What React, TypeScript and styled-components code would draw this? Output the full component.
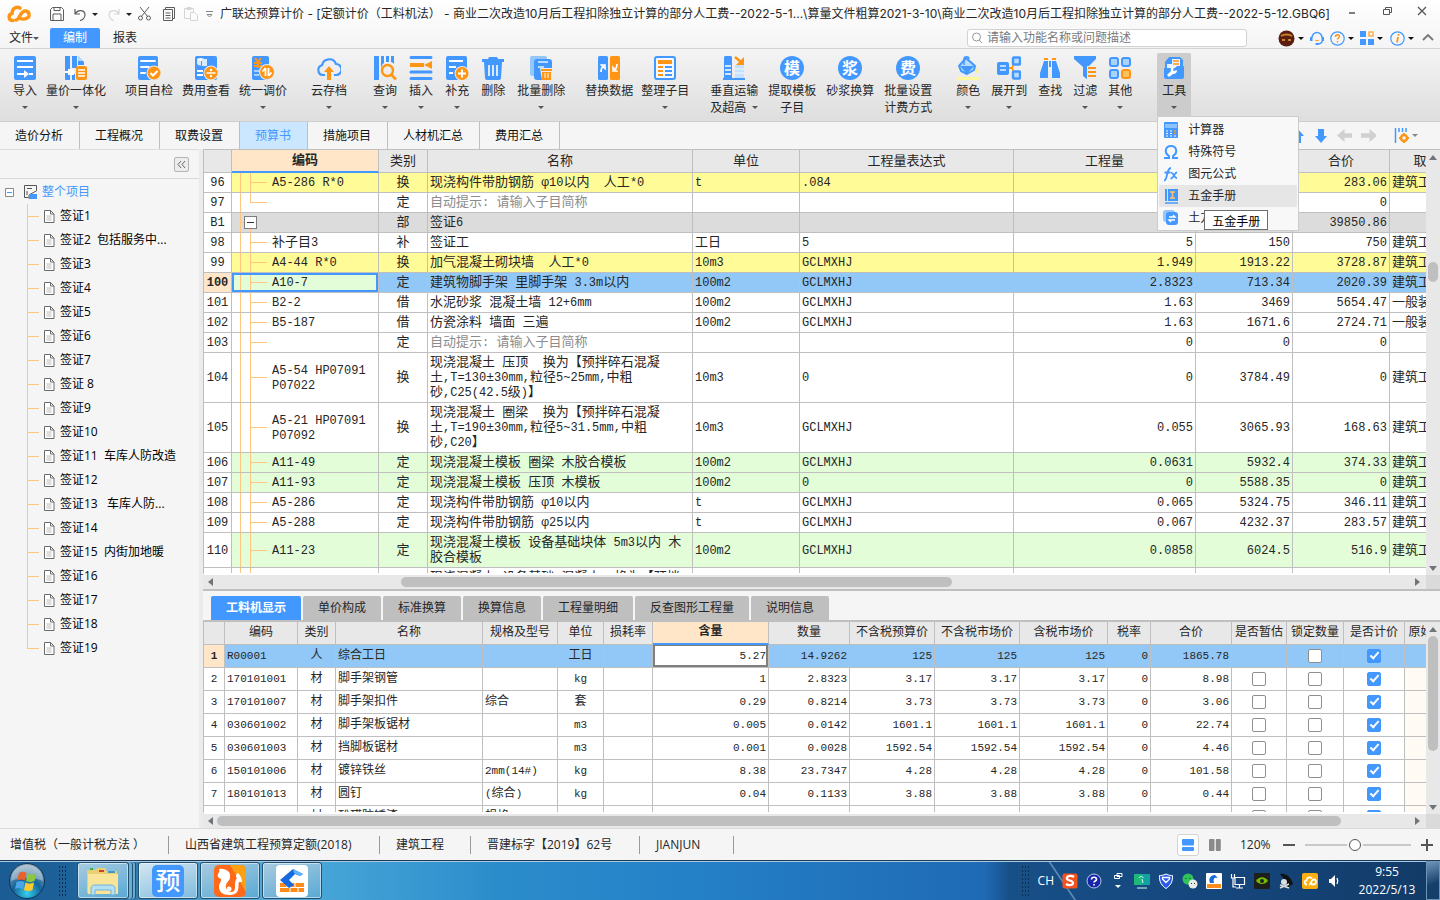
import React from "react";
import styled, { createGlobalStyle, css } from "styled-components";

const ui = `"Open Sans", "Noto Sans CJK SC", sans-serif`;
const mono = `"Liberation Mono", "Noto Sans CJK SC", monospace`;
const blue = "#4398ff";
const orange = "#ff9514";
const line = "#bfbfbf";

const Global = createGlobalStyle`
  *, *::before, *::after { box-sizing: border-box; }
  body { margin: 0; font: 12px/16px ${ui}; color: #262626; background: #f5f5f5; }
  button { font: inherit; color: inherit; background: none; border: 0; padding: 0; white-space: nowrap; }
  svg { display: block; flex: none; }
`;

const App_ = styled.div`
  display: flex;
  flex-direction: column;
  height: 100vh;
  min-width: 1280px;
  overflow: hidden;
`;

const Caret = styled.span<{ $c?: string }>`
  flex: none;
  width: 0;
  height: 0;
  border: 3px solid transparent;
  border-top-color: ${(p) => p.$c || "#555"};
  border-bottom: 0;
`;

/* ---------- title and menu ---------- */

const Top = styled.header`
  flex: none;
  height: 49px;
  background: linear-gradient(#ffffff, #f4f4f4);
  border-bottom: 1px solid #d4d4d4;
`;

const TitleRow = styled.div`
  display: flex;
  align-items: center;
  height: 28px;
  padding: 0 12px 0 7px;
`;

const QuickBar = styled.div`
  display: flex;
  align-items: center;
  width: 213px;
  flex: none;
  button { display: flex; align-items: center; }
`;

const QuickButton = styled.button<{ $w: number }>`
  width: ${(p) => p.$w}px;
  height: 24px;
`;

const Title = styled.h1`
  flex: 1;
  min-width: 0;
  margin: 0;
  font: 400 12px/28px Inter, "Noto Sans CJK SC", sans-serif;
  white-space: nowrap;
  overflow: hidden;
`;

const WindowButtons = styled.div`
  display: flex;
  gap: 23px;
  padding-bottom: 6px;
  button { display: block; }
`;

const MenuRow = styled.div`
  display: flex;
  height: 20px;
  align-items: center;
  padding-right: 6px;
`;

const FileMenu = styled.button`
  display: flex;
  align-items: center;
  width: 50px;
  padding-left: 9px;
`;

const MenuTab = styled.button<{ $on?: boolean }>`
  width: 50px;
  height: 20px;
  line-height: 20px;
  ${(p) => p.$on && css`background: ${blue}; color: #fff; border-radius: 2px 2px 0 0;`}
`;

const Search = styled.label`
  display: flex;
  align-items: center;
  gap: 4px;
  width: 280px;
  height: 18px;
  margin-left: auto;
  margin-right: 31px;
  padding: 0 3px;
  background: #fff;
  border: 1px solid #d2d2d2;
  border-radius: 3px;
  input {
    flex: 1;
    min-width: 0;
    border: 0;
    padding: 0;
    outline: 0;
    background: none;
    font: 12px/16px ${ui};
    &::placeholder { color: #7a7a7a; opacity: 1; }
  }
`;

const MenuIcon = styled.button<{ $w: number }>`
  display: flex;
  align-items: center;
  gap: 3px;
  width: ${(p) => p.$w}px;
`;

/* ---------- ribbon ---------- */

const Ribbon = styled.nav`
  display: flex;
  flex: none;
  height: 73px;
  padding-top: 4px;
  padding-left: 13px;
  background: linear-gradient(#f4f4f4, #dedede);
  border-bottom: 1px solid #cfcfcf;
`;

const RibbonGroup = styled.div<{ $gap: number; $before: number }>`
  display: flex;
  gap: ${(p) => p.$gap}px;
  margin-left: ${(p) => p.$before}px;
`;

const RibbonButton = styled.button<{ $on?: boolean }>`
  position: relative;
  display: flex;
  flex-direction: column;
  align-items: center;
  height: 64px;
  padding-top: 3px;
  border-radius: 2px;
  line-height: 17px;
  ${(p) => p.$on && css`width: 34px; background: #cccccc;`}
`;

const RibbonLabel = styled.span`
  padding-top: 2px;
`;

const RibbonMore = styled.span`
  display: flex;
  align-items: center;
  gap: 6px;
  height: 17px;
`;

const Menu = styled.ul`
  position: absolute;
  z-index: 5;
  top: 63px;
  left: 0;
  width: 142px;
  margin: 0;
  padding: 2px 1px 1px;
  list-style: none;
  background: #f8f8f8;
  border: 1px solid #cccccc;
`;

const MenuItem = styled.li<{ $on?: boolean }>`
  display: flex;
  align-items: center;
  gap: 9px;
  height: 22px;
  padding-left: 4px;
  background: ${(p) => (p.$on ? "#e6e6e6" : "none")};
  svg { width: 16px; height: 16px; }
`;

const Tip = styled.span`
  position: absolute;
  right: 30px;
  bottom: 0;
  padding: 0 7px;
  height: 20px;
  line-height: 22px;
  color: #000;
  background: #fff;
  border: 1px solid #6e6e6e;
`;

const MenuHolder = styled.div`
  position: relative;
`;

/* ---------- page tabs ---------- */

const PageTabs = styled.nav`
  display: flex;
  flex: none;
  height: 27px;
  background: #f5f5f5;
  padding-right: 22px;
`;

const PageTab = styled.button<{ $on?: boolean }>`
  padding: 0 16px 0 15px;
  border-right: 1px solid ${line};
  line-height: 27px;
  color: ${(p) => (p.$on ? blue : "#111")};
  background: ${(p) => (p.$on ? "#cbe6ff" : "none")};
`;

const TabTools = styled.div`
  display: flex;
  align-items: center;
  gap: 9px;
  margin-left: auto;
`;

const ColumnTool = styled.button`
  display: flex;
  align-items: center;
  gap: 3px;
  margin-left: 9px;
`;

/* ---------- body ---------- */

const Body = styled.main`
  flex: 1;
  min-height: 0;
  display: grid;
  grid-template-columns: 199px minmax(0, 1fr);
  column-gap: 4px;
  background: #ebebeb;
`;

const Side = styled.aside`
  background: #f5f5f5;
  border-top: 1px solid #dcdcdc;
`;

const SideHead = styled.div`
  display: flex;
  justify-content: flex-end;
  align-items: center;
  height: 29px;
  padding-right: 10px;
  border-bottom: 1px solid #d9d9d9;
`;

const Collapse = styled.button`
  width: 15px;
  height: 15px;
  border: 1px solid #b4b4b4 !important;
  border-radius: 2px;
  background: #ececec !important;
`;

const TreeRoot = styled.div`
  display: flex;
  align-items: center;
  gap: 4px;
  height: 24px;
  margin-top: 1px;
  padding-left: 5px;
  color: ${blue};
  svg:first-child { margin-right: 6px; }
`;

const Tree = styled.ul`
  margin: 0 0 0 27px;
  padding: 0;
  list-style: none;
`;

const Leaf = styled.li`
  display: flex;
  align-items: center;
  height: 24px;
  gap: 5px;
  white-space: pre;
  color: #000;
  background: linear-gradient(#ffc67e, #ffc67e) 0 0 / 1px 100% no-repeat;
  &:last-child { background-size: 1px 50%; }
  &::before { content: ""; width: 12px; height: 1px; background: #ffc67e; }
`;

const Work = styled.section`
  display: flex;
  flex-direction: column;
  min-height: 0;
  background: #f5f5f5;
`;

const Pane = styled.div<{ $fixed?: number }>`
  display: flex;
  min-height: 0;
  flex: ${(p) => (p.$fixed ? `none` : "1")};
  height: ${(p) => (p.$fixed ? `${p.$fixed}px` : "auto")};
  border-top: 1px solid ${line};
`;

const Clip = styled.div`
  flex: 1;
  min-width: 0;
  overflow: hidden;
  border-left: 1px solid ${line};
  border-bottom: 2px solid #fff;
  background: #fff;
`;

const VBar = styled.div<{ $before: number; $thumb: number }>`
  flex: none;
  display: flex;
  flex-direction: column;
  align-items: center;
  width: 14px;
  padding: 4px 0 3px;
  background: #e8e8e8;
  span { width: 10px; height: ${(p) => p.$thumb}px; margin-top: ${(p) => p.$before}px; border-radius: 5px; background: ${line}; }
  svg:last-child { margin-top: auto; }
`;

const HBar = styled.div<{ $before: number; $share: number }>`
  flex: none;
  display: flex;
  align-items: center;
  height: 14px;
  padding: 0 19px 0 4px;
  background: linear-gradient(#e8e8e8, #e8e8e8) 0 0 / calc(100% - 14px) 100% no-repeat #dadada;
  span { width: ${(p) => p.$share}%; height: 10px; margin-left: ${(p) => p.$before}px; border-radius: 5px; background: ${line}; }
  svg:last-child { margin-left: auto; }
`;

const Grid = styled.table<{ $small?: boolean }>`
  width: ${(p) => (p.$small ? 1257 : 1286)}px;
  table-layout: fixed;
  border-collapse: separate;
  border-spacing: 0;
  font: ${(p) => (p.$small ? "12px/15px" : "13px/15px")} ${mono};
  code { font: ${(p) => (p.$small ? "11px/1px" : "12px/1px")} ${mono}; font-weight: inherit; }
`;

const Th = styled.th<{ $on?: boolean; $h: number }>`
  height: ${(p) => p.$h}px;
  padding: 0;
  overflow: hidden;
  white-space: nowrap;
  font-weight: ${(p) => (p.$on ? 700 : 400)};
  background: ${(p) => (p.$on ? "#ffe6c8" : "#e8e8e8")};
  border-right: 1px solid ${line};
  border-bottom: ${(p) => (p.$on ? `2px solid ${blue}` : `1px solid ${line}`)};
`;

const Row = styled.tr<{ $bg: string; $h: number }>`
  height: ${(p) => p.$h}px;
  background: ${(p) => p.$bg};
`;

const Td = styled.td<{ $align?: string; $dim?: boolean; $bg?: string }>`
  padding: 0 2px;
  overflow: hidden;
  white-space: pre;
  text-align: ${(p) => p.$align || "left"};
  color: ${(p) => (p.$dim ? "#8c8c8c" : "#262626")};
  background-color: ${(p) => p.$bg || "transparent"};
  border-right: 1px solid ${line};
  border-bottom: 1px solid ${line};
`;

const NumTh = styled.th<{ $on?: boolean }>`
  padding: 0;
  font-weight: ${(p) => (p.$on ? 700 : 400)};
  background: ${(p) => (p.$on ? "#ffe6c8" : "#fff")};
  border-right: 1px solid ${line};
  border-bottom: 1px solid ${line};
`;

const twig = "linear-gradient(#ffc67e, #ffc67e)";
const CodeTd = styled(Td)<{ $kind?: string; $sel?: boolean }>`
  padding-left: 40px;
  background-image: ${twig}, ${twig}, ${twig};
  background-repeat: no-repeat;
  background-position: 8px 0, 18px 0, 18px 50%;
  background-size: 1px 100%, 1px 100%, 17px 1px;
  ${(p) => p.$kind === "end" && css`background-size: 1px 100%, 1px 50%, 17px 1px;`}
  ${(p) =>
    p.$kind === "part" &&
    css`
      padding-left: 12px;
      background-size: 1px 100%, 1px 50%, 4px 1px;
      background-position: 8px 0, 18px 100%, 8px 50%;
    `}
  ${(p) => p.$sel && css`background-color: #e2fdd8; box-shadow: inset 0 0 0 2px ${blue};`}
`;

const Fold = styled.button`
  display: block;
  width: 13px;
  height: 13px;
  background: linear-gradient(#333, #333) center / 7px 1px no-repeat #fff;
  border: 1px solid #7d7d7d;
`;

const CellInput = styled.input`
  display: block;
  width: 100%;
  height: 22px;
  padding: 0;
  text-align: right;
  font: 11px/15px ${mono};
  color: #262626;
  background: #fff;
  border: 2px solid #7f7f7f;
  border-top-width: 1px;
  outline: 0;
`;

const InputTd = styled(Td)`
  padding: 0;
`;

const Check = styled.input`
  appearance: none;
  display: block;
  width: 14px;
  height: 14px;
  margin: 0 auto;
  border: 1px solid #8f8f8f;
  border-radius: 2px;
  background: #fff;
  &:checked { background: ${blue}; border-color: ${blue}; }
  &:checked::after {
    content: "";
    display: block;
    width: 5px;
    height: 9px;
    margin: 0 0 0 4px;
    border: solid #fff;
    border-width: 0 2px 2px 0;
    transform: rotate(42deg);
  }
`;

const DetailTabs = styled.nav`
  flex: none;
  display: flex;
  align-items: flex-end;
  gap: 2px;
  height: 32px;
  padding: 0 8px;
  border-top: 2px solid ${line};
  border-bottom: 1px solid ${line};
`;

const DetailTab = styled.button<{ $on?: boolean }>`
  height: 24px;
  padding: 0 15px;
  border-radius: 2px 2px 0 0;
  line-height: 24px;
  font-weight: ${(p) => (p.$on ? 700 : 400)};
  color: ${(p) => (p.$on ? "#fff" : "#262626")};
  background: ${(p) => (p.$on ? blue : line)};
`;

/* ---------- status bar ---------- */

const Status = styled.footer`
  flex: none;
  display: flex;
  align-items: center;
  height: 32px;
  padding: 0 7px 0 10px;
  border-top: 1px solid #dadada;
  background: #f5f5f5;
`;

const StatusItem = styled.span<{ $w: number }>`
  width: ${(p) => p.$w}px;
  margin-right: 16px;
  border-right: 1px solid #9a9a9a;
  line-height: 18px;
  white-space: nowrap;
`;

const Views = styled.div`
  display: flex;
  gap: 5px;
  margin-left: auto;
`;

const ViewButton = styled.button<{ $on?: boolean }>`
  display: grid;
  place-items: center;
  width: 22px;
  height: 22px;
  border: 1px solid ${(p) => (p.$on ? "#d4d4d4" : "transparent")};
  border-radius: 3px;
  background: ${(p) => (p.$on ? "#fff" : "none")};
`;

const Zoom = styled.div`
  display: flex;
  align-items: center;
  gap: 10px;
  margin-left: 14px;
  output { width: 33px; }
  button { display: block; }
  input {
    appearance: none;
    width: 106px;
    height: 14px;
    margin: 0;
    background: linear-gradient(#c8c8c8, #c8c8c8) center / 100% 2px no-repeat;
    &::-webkit-slider-thumb {
      appearance: none;
      width: 12px;
      height: 12px;
      border: 1px solid #555;
      border-radius: 50%;
      background: #fff;
      box-shadow: 0 0 0 2px #f5f5f5;
    }
  }
`;

/* ---------- desktop task bar ---------- */

const TaskBar = styled.footer`
  flex: none;
  display: flex;
  align-items: stretch;
  height: 40px;
  padding-left: 8px;
  border-top: 1px solid #1d3a58;
  box-shadow: inset 0 1px 0 #a9c9e2;
  color: #fff;
  background:
    linear-gradient(56deg, transparent 48%, rgba(160, 195, 225, 0.6) 50%, transparent 52%) 1032px 0 / 60px 100% no-repeat,
    linear-gradient(90deg, #1a5c93 0, #1d6299 70px, #58a9d6 240px, #43a3d6 340px, #2b8ccb 500px, #2480c7 700px, #1f6ab4 985px, #174f87 1010px, #15467c 85%, #123a66 100%);
`;

const Start = styled.button`
  display: block;
  align-self: center;
`;

const Dots = styled.span`
  width: 9px;
  margin: 4px 10px 4px 12px;
  background: radial-gradient(#0c2f50 1px, transparent 1px) 0 0 / 3px 4px;
`;

const Task = styled.button<{ $on?: boolean }>`
  display: grid;
  place-items: center;
  width: 60px;
  margin: 1px 2px 1px 0;
  border: 1px solid #22506f;
  border-radius: 3px;
  box-shadow: inset 0 0 0 1px rgba(255, 255, 255, 0.5);
  background: ${(p) => (p.$on ? "linear-gradient(160deg, #d5e7f2, #7fbbdc)" : "linear-gradient(160deg, #a9cbe0, #58a9d4)")};
`;

const TaskStack = styled(Task)`
  width: 52px;
  margin-right: 9px;
  box-shadow: inset 0 0 0 1px rgba(255, 255, 255, 0.5), 3px 0 0 #6aaed4, 4px 0 0 #22506f, 6px 0 0 #6aaed4, 7px 0 0 #22506f;
`;

const Tray = styled.div`
  display: flex;
  align-items: center;
  margin-left: auto;
`;

const TrayIcons = styled.div`
  align-self: stretch;
  display: flex;
  align-items: center;
  gap: 8px;
`;

const TrayDots = styled(Dots)`
  align-self: stretch;
  margin: 4px 0;
`;

const Clock = styled.time`
  width: 84px;
  padding-left: 6px;
  text-align: center;
  line-height: 18px;
`;

const ShowDesktop = styled.button`
  align-self: stretch;
  width: 14px;
  border: 1px solid #6d93b5 !important;
  background: linear-gradient(160deg, #6f95b7, #153e6b 60%) !important;
`;

/* ---------- drawings ---------- */

const B = blue;
const O = orange;
const S = ({ children, s = 24, v = 24 }: any) => (
  <svg width={s} height={s} viewBox={`0 0 ${v} ${v}`} fill="none" aria-hidden="true">{children}</svg>
);
const disc = (ch: string) => (
  <>
    <circle cx="12" cy="12" r="12" fill={B} />
    <text x="12" y="18" textAnchor="middle" fontSize="16" fontWeight="700" fill="#fff" fontFamily="Noto Sans CJK SC">{ch}</text>
  </>
);

const icons: Record<string, React.ReactNode> = {
  import: <><rect x="1" width="22" height="24" rx="2" fill={B} /><path d="M4 5h16M4 11h16M4 18h9M16 18h4" stroke="#fff" strokeWidth="2" /><path d="M11 14l5 4-5 4z" fill="#fff" /></>,
  quantity: <><path d="M1 0h5v24H2a1 1 0 0 1-1-1zM8 0h5v12H8zM8 18h3v6H8zM14 0l6 6v3h-6z" fill={B} /><path d="M14 0l5 5h-5z" fill="#b8d9ff" /><rect x="4" y="13" width="6" height="6" fill="#fff" /><path d="M1 16h10" stroke="#fff" strokeWidth="2" /><rect x="12" y="10" width="11" height="14" rx="2" fill={O} /><path d="M14 14h7M14 17h7M14 20h7" stroke="#fff" strokeWidth="1.5" /></>,
  check: <><rect x="1" width="20" height="24" rx="2" fill={B} /><path d="M4 5h14M4 11h8M4 17h4" stroke="#fff" strokeWidth="1.8" strokeLinecap="round" /><circle cx="17" cy="17" r="7.5" fill="#eaeaea" /><circle cx="17" cy="17" r="6.5" fill={O} /><path d="M13.5 17l2.5 2.5 4.5-4.5" stroke="#fff" strokeWidth="2" /></>,
  fee: <><rect x="1" width="22" height="24" rx="2" fill={B} /><ellipse cx="6.500" cy="3.500" rx="3.500" ry="1.500" fill="#fff" /><path d="M3 4v4c1 1.500 3 1.500 4 1.500V5M8 3h5v7H8z" fill="#d8ebff" /><path d="M3 15h6M3 19h6" stroke="#fff" strokeWidth="2" /><circle cx="17" cy="17" r="7.5" fill="#eaeaea" /><circle cx="17" cy="17" r="6.5" fill={O} /><path d="M12.5 17h9" stroke="#fff" strokeWidth="1.5" /><circle cx="17" cy="14" r="1.2" fill="#fff" /><circle cx="17" cy="20" r="1.2" fill="#fff" /></>,
  price: <><rect x="1" width="17" height="24" rx="2" fill={B} /><path d="M4 2l3 4 3-4M7 6v6M3 7h8M3 10h8" stroke={O} strokeWidth="2" /><path d="M3 15h5M3 19h5" stroke="#a8d0ff" strokeWidth="2" /><circle cx="16" cy="16" r="8" fill="#eaeaea" /><circle cx="16" cy="16" r="7" fill={O} /><path d="M14.5 12v8M17.5 12v8M14.5 12l-3 3.5M17.5 20l3-3.5" stroke="#fff" strokeWidth="1.8" /></>,
  cloud: <><path d="M8 19H6a5 5 0 0 1-1-9.8A7.3 7.3 0 0 1 19 8a5.5 5.5 0 0 1 0 11h-2" stroke={B} strokeWidth="2.2" /><path d="M12 10l5 6h-3v8h-4v-8H7z" fill={O} /></>,
  query: <><path d="M1 0h5v24H1zM8 0h3v7c-2 1-2 3-3 5zM13 0h3v6h-3zM18 0h3v8c-1-1-2-2-3-2z" fill={B} /><circle cx="14.500" cy="14.500" r="5.500" stroke={O} strokeWidth="2.4" /><path d="M18 18.500l5 5" stroke={O} strokeWidth="2.6" /></>,
  insert: <><path d="M2 1.500h20M2 16h20M2 22.500h20" stroke={B} strokeWidth="3" strokeLinecap="round" /><path d="M1 9h14" stroke={O} strokeWidth="4" /><path d="M23 5v8l-8-4z" fill={O} /></>,
  add: <><rect x="1" width="21" height="24" rx="2" fill={B} /><path d="M4 5h14M4 11h7M4 17h4" stroke="#fff" strokeWidth="1.8" /><circle cx="17" cy="17.5" r="7.5" fill="#eaeaea" /><circle cx="17" cy="17.5" r="6.5" fill={O} /><path d="M13 17.500h8M17 13.500v8" stroke="#fff" strokeWidth="2" /></>,
  trash: <><path d="M8 1h8l1 2h6v3H1V3h6z" fill={B} /><path d="M3 6h18l-1 16a2 2 0 0 1-2 2H6a2 2 0 0 1-2-2z" fill={B} /><path d="M8 9v11M12 9v11M16 9v11" stroke="#fff" strokeWidth="1.6" /></>,
  trashes: <><rect x="1" width="17" height="20" rx="2" fill="#93c7f8" /><rect x="5" y="3" width="18" height="21" rx="3" fill={B} /><path d="M9 6h10M9 11h6" stroke="#b8dcff" strokeWidth="2" /><path d="M11 12h12v12H13z" fill="#ececec" /><path d="M12 13h11v2H12zM13 16h9v8h-9z" fill={O} /><path d="M16 17v5M19 17v5" stroke="#fff" /></>,
  replace: <><rect x="1" width="10" height="24" rx="1.5" fill={B} /><rect x="13" width="10" height="24" rx="1.5" fill={O} /><path d="M4 16c0-3 0-4 2-5.500M8 9v3.500L4.500 9zM20 8c0 3 0 4-2 5.500M16 15v-3.500l3.500 3.500z" stroke="#fff" strokeWidth="1.6" /></>,
  tidy: <><rect x="2" y="1" width="20" height="22" rx="2" stroke={B} strokeWidth="2" fill="#f5f9ff" /><rect x="5" y="4" width="14" height="4" fill={O} /><path d="M5 11h5M5 15h5M5 19h5" stroke={O} strokeWidth="2" /><path d="M12 11h7M12 15h7M12 19h7" stroke={B} strokeWidth="2" /></>,
  vertical: <><path d="M2 1l1-1h6l1 1v21H2z" fill={B} /><path d="M3 10h6M3 14h6M3 18h6" stroke="#fff" strokeWidth="1.500" /><rect x="13" y="9" width="9" height="13" fill="#c4e2ff" /><path d="M13 13h9M13 17h9" stroke="#f5f9ff" /><path d="M1 23h22" stroke={B} strokeWidth="2" /><path d="M13 1l6 5" stroke={O} strokeWidth="2.5" /><path d="M22 1v8h-8z" fill={O} /></>,
  mo: disc("模"),
  jiang: disc("浆"),
  fei: disc("费"),
  color: <><path d="M10 2l9 8-1 4-7 4-6-3-2-5z" fill="#b8dcff" stroke={B} strokeWidth="2" strokeLinejoin="round" /><path d="M4 10h14l-7 8z" fill={B} /><path d="M8 9V3c0-3 5-3 5 0" stroke={B} strokeWidth="1.5" /><path d="M21 12c2 3 1 5 0 5s-2-2 0-5z" fill="#fff47a" /><path d="M1 22.500h22" stroke="#fff89a" strokeWidth="3" /></>,
  expand: <><path d="M12 12h3l3-7M15 12l3 7" stroke={O} strokeWidth="1.8" /><rect x="0" y="6" width="12" height="13" rx="2" fill={B} /><path d="M3 10h6M3 14h6" stroke="#b8dcff" strokeWidth="2" /><rect x="16" y="1.5" width="7" height="7" rx="1" fill="#b8dcff" stroke={B} strokeWidth="2.5" /><rect x="16" y="15.5" width="7" height="7" rx="1" fill="#b8dcff" stroke={B} strokeWidth="2.5" /></>,
  find: <><path d="M6 5h4v17H2v-5zM18 5h-4v17h8v-5z" fill={B} /><path d="M11 5v6h2V5z" fill={B} /><path d="M6 2h4v2H6zM14 2h4v2h-4z" fill={O} /></>,
  filter: <><path d="M1 0h22v3l-8 8v13l-5-4v-9L1 3z" fill={B} /><path d="M14 10h9v14h-9z" fill="#ececec" /><path d="M15 12h8M15 16h8M15 20h8" stroke={O} strokeWidth="2" /></>,
  others: <><g fill="#a9d2ff" stroke={B} strokeWidth="2"><rect x="2" y="2" width="8" height="8" rx="2" /><rect x="14" y="2" width="8" height="8" rx="2" /><rect x="2" y="14" width="8" height="8" rx="2" /></g><rect x="14" y="14" width="8" height="8" rx="2" fill="#ffbf5e" stroke={O} strokeWidth="2" /></>,
  tools: <><path d="M7 1h11l3 3v17H3V6z" fill={B} /><path d="M10 3h8v10H5V8h5z" fill="#e8f3ff" /><path d="M11 5h6M11 8h6" stroke={O} strokeWidth="1.5" /><path d="M2 12h11l2-2h6a1 1 0 0 1 1 1v10a2 2 0 0 1-2 2H4a2 2 0 0 1-2-2z" fill={B} /><path d="M5 19l4-4c-1-3 1-4 3-4l-1 3 1 1 3-1c0 3-2 4-4 4l-4 3z" fill="#fff" /></>,
};

const Arrow = ({ d }: { d: "up" | "down" | "left" | "right" }) => {
  const p = { up: "M0 6l4-5 4 5z", down: "M0 2l4 5 4-5z", left: "M6 0L1 4l5 4z", right: "M2 0l5 4-5 4z" }[d];
  return <svg width="8" height="8" viewBox="0 0 8 8"><path d={p} fill="#70757a" /></svg>;
};

/* ---------- data ---------- */

type Tool = { i: string; t: string; t2?: string; more?: boolean; on?: boolean };
const ribbon: { gap: number; before: number; tools: Tool[] }[] = [
  { gap: 9, before: 0, tools: [{ i: "import", t: "导入", more: true }, { i: "quantity", t: "量价一体化", more: true }] },
  { gap: 9, before: 19, tools: [{ i: "check", t: "项目自检" }, { i: "fee", t: "费用查看" }, { i: "price", t: "统一调价", more: true }] },
  { gap: 0, before: 24, tools: [{ i: "cloud", t: "云存档", more: true }] },
  { gap: 12, before: 26, tools: [{ i: "query", t: "查询", more: true }, { i: "insert", t: "插入", more: true }, { i: "add", t: "补充", more: true }, { i: "trash", t: "删除" }, { i: "trashes", t: "批量删除", more: true }] },
  { gap: 8, before: 20, tools: [{ i: "replace", t: "替换数据" }, { i: "tidy", t: "整理子目", more: true }] },
  { gap: 10, before: 21, tools: [{ i: "vertical", t: "垂直运输", t2: "及超高", more: true }, { i: "mo", t: "提取模板", t2: "子目" }, { i: "jiang", t: "砂浆换算" }, { i: "fei", t: "批量设置", t2: "计费方式" }] },
  { gap: 11, before: 24, tools: [{ i: "color", t: "颜色", more: true }, { i: "expand", t: "展开到", more: true }, { i: "find", t: "查找" }, { i: "filter", t: "过滤", more: true }, { i: "others", t: "其他", more: true }] },
];

const mainHeads = ["", "编码", "类别", "名称", "单位", "工程量表达式", "工程量", "单价", "合价", "取费专业"];
const mainWidths = [28, 147, 49, 265, 107, 214, 182, 97, 97, 100];
const Y = "#fffb96", W = "#ffffff", G = "#e2fdd8", D = "#dcdcdc", SEL = "#92c8f7";
const hint = "自动提示: 请输入子目简称";
const jz = "建筑工程";
const mainRows: [string, string, string, string, string, string, string, string, string, string, string, number][] = [
  ["96", "A5-286 R*0", "换", "现浇构件带肋钢筋 φ10以内  人工*0", "t", ".084", "0.084", "3369.8", "283.06", jz, Y, 20],
  ["97", "", "定", hint, "", "", "0", "0", "0", "", W, 20],
  ["B1", "", "部", "签证6", "", "", "", "", "39850.86", "", D, 20],
  ["98", "补子目3", "补", "签证工", "工日", "5", "5", "150", "750", jz, W, 20],
  ["99", "A4-44 R*0", "换", "加气混凝土砌块墙  人工*0", "10m3", "GCLMXHJ", "1.949", "1913.22", "3728.87", jz, Y, 20],
  ["100", "A10-7", "定", "建筑物脚手架 里脚手架 3.3m以内", "100m2", "GCLMXHJ", "2.8323", "713.34", "2020.39", jz, SEL, 20],
  ["101", "B2-2", "借", "水泥砂浆 混凝土墙 12+6mm", "100m2", "GCLMXHJ", "1.63", "3469", "5654.47", "一般装饰", W, 20],
  ["102", "B5-187", "借", "仿瓷涂料 墙面 三遍", "100m2", "GCLMXHJ", "1.63", "1671.6", "2724.71", "一般装饰", W, 20],
  ["103", "", "定", hint, "", "", "0", "0", "0", "", W, 20],
  ["104", "A5-54 HP07091\nP07022", "换", "现浇混凝土 压顶  换为【预拌碎石混凝\n土,T=130±30mm,粒径5~25mm,中粗\n砂,C25(42.5级)】", "10m3", "0", "0", "3784.49", "0", jz, W, 50],
  ["105", "A5-21 HP07091\nP07092", "换", "现浇混凝土 圈梁  换为【预拌碎石混凝\n土,T=190±30mm,粒径5~31.5mm,中粗\n砂,C20】", "10m3", "GCLMXHJ", "0.055", "3065.93", "168.63", jz, W, 50],
  ["106", "A11-49", "定", "现浇混凝土模板 圈梁 木胶合模板", "100m2", "GCLMXHJ", "0.0631", "5932.4", "374.33", jz, G, 20],
  ["107", "A11-93", "定", "现浇混凝土模板 压顶 木模板", "100m2", "0", "0", "5588.35", "0", jz, G, 20],
  ["108", "A5-286", "定", "现浇构件带肋钢筋 φ10以内", "t", "GCLMXHJ", "0.065", "5324.75", "346.11", jz, W, 20],
  ["109", "A5-288", "定", "现浇构件带肋钢筋 φ25以内", "t", "GCLMXHJ", "0.067", "4232.37", "283.57", jz, W, 20],
  ["110", "A11-23", "定", "现浇混凝土模板 设备基础块体 5m3以内 木\n胶合模板", "100m2", "GCLMXHJ", "0.0858", "6024.5", "516.9", jz, G, 35],
  ["111", "A5-12", "换", "现浇混凝土 设备基础 混凝土  换为【预拌\n碎石混凝土,T=190±30mm,粒径5~31.5mm,\n中粗砂】", "10m3", "GCLMXHJ", "0.21", "3010.5", "632.2", jz, W, 50],
];

const detailHeads = ["", "编码", "类别", "名称", "规格及型号", "单位", "损耗率", "含量", "数量", "不含税预算价", "不含税市场价", "含税市场价", "税率", "合价", "是否暂估", "锁定数量", "是否计价", "原始含量"];
const detailWidths = [21, 73, 38, 147, 75, 46, 49, 116, 81, 85, 85, 88, 43, 81, 55, 57, 61, 56];
const detailRows = [
  ["R00001", "人", "综合工日", "", "工日", "5.27", "14.9262", "125", "1865.78"],
  ["170101001", "材", "脚手架钢管", "", "kg", "1", "2.8323", "3.17", "8.98"],
  ["170101007", "材", "脚手架扣件", "综合", "套", "0.29", "0.8214", "3.73", "3.06"],
  ["030601002", "材", "脚手架板锯材", "", "m3", "0.005", "0.0142", "1601.1", "22.74"],
  ["030601003", "材", "挡脚板锯材", "", "m3", "0.001", "0.0028", "1592.54", "4.46"],
  ["150101006", "材", "镀锌铁丝", "2mm(14#)", "kg", "8.38", "23.7347", "4.28", "101.58"],
  ["180101013", "材", "圆钉", "(综合)", "kg", "0.04", "0.1133", "3.88", "0.44"],
  ["130101021", "材", "酚醛防锈漆", "规格", "kg", "0.39", "1.1046", "11.2", "12.37"],
];

const leaves = ["签证1", "签证2  包括服务中...", "签证3", "签证4", "签证5", "签证6", "签证7", "签证 8", "签证9", "签证10", "签证11  车库人防改造", "签证12", "签证13   车库人防...", "签证14", "签证15  内街加地暖", "签证16", "签证17", "签证18", "签证19"];

const Mixed = ({ t }: { t: string }) => (
  <>{t.split(/([\x20-\x7e]+)/).map((s, i) => (i % 2 ? <code key={i}>{s}</code> : s))}</>
);

/* ---------- sections ---------- */

const gs = "#5c5c5c";
const Header = () => (
  <Top>
    <TitleRow>
      <QuickBar>
        <QuickButton $w={43} aria-label="广联达">
          <svg width="24" height="18" viewBox="0 0 24 18" fill="none" stroke={O} strokeWidth="3.4" strokeLinecap="round"><path d="M6 15.500c-5 0-5-6-1-7C5 3 10 1 13 3M9 15c4 0 4-10 10-9 4 1 4 6 1 7-3 2-6 1-8 0" /></svg>
        </QuickButton>
        <QuickButton $w={24} aria-label="保存">
          <S s={14} v={14}><path d="M.5 13.500v-11l2-2h9l2 2v11zM4 .5v3h6v-3M3 13V7h8v6" stroke={gs} /></S>
        </QuickButton>
        <QuickButton $w={18} aria-label="撤销">
          <S s={13} v={13}><path d="M1 1v5h5M1.500 5.500C4 1 11 2 11 7c0 3-3 5-5 5.500" stroke={gs} strokeWidth="1.2" /></S>
        </QuickButton>
        <Caret $c="#222" />
        <QuickButton $w={28} aria-label="重做">
          <svg width="22" height="13" viewBox="-9 0 22 13" fill="none"><path d="M12 1v5H7M11.500 5.500C9 1 2 2 2 7c0 3 3 5 5 5.500" stroke="#d5d5d5" strokeWidth="1.2" /></svg>
        </QuickButton>
        <Caret $c="#222" />
        <QuickButton $w={30} aria-label="剪切">
          <svg width="20" height="14" viewBox="-6 0 20 14" fill="none" stroke={gs}><path d="M2 0l8 10M11 0L3 10" /><circle cx="2.5" cy="11" r="2" /><circle cx="10.5" cy="11" r="2" /></svg>
        </QuickButton>
        <QuickButton $w={22} aria-label="复制">
          <S s={14} v={14}><path d="M3.500 2.500v-2h9v11h-2M1.500 2.500h9v11h-9zM3.500 6h5M3.500 8.500h5M3.500 11h5" stroke={gs} /></S>
        </QuickButton>
        <QuickButton $w={22} aria-label="粘贴">
          <S s={14} v={14}><path d="M6 11.500H.5v-10h9V5M3 2.500h4v-2H3zM6.500 5.500h4l3 3v5h-7z" stroke="#d5d5d5" /></S>
        </QuickButton>
        <S s={7} v={7}><path d="M0 .5h7M1 3.500h5L3.500 6z" stroke="#888" /></S>
      </QuickBar>
      <Title>广联达预算计价 - [定额计价（工料机法） - 商业二次改造10月后工程扣除独立计算的部分人工费--2022-5-1...\算量文件粗算2021-3-10\商业二次改造10月后工程扣除独立计算的部分人工费--2022-5-12.GBQ6]</Title>
      <WindowButtons>
        <button aria-label="最小化"><S s={12} v={12}><path d="M3 8h6" stroke="#555" strokeWidth="1.5" /></S></button>
        <button aria-label="还原"><S s={12} v={12}><path d="M2.500 4.500h6v5h-6zM4.500 4.500v-2h6v5h-2" stroke="#555" /></S></button>
        <button aria-label="关闭"><S s={12} v={12}><path d="M2 2l8 8M10 2l-8 8" stroke="#555" strokeWidth="1.3" /></S></button>
      </WindowButtons>
    </TitleRow>
    <MenuRow>
      <FileMenu>文件<Caret /></FileMenu>
      <MenuTab $on>编制</MenuTab>
      <MenuTab>报表</MenuTab>
      <Search>
        <S s={12} v={12}><circle cx="5.5" cy="5" r="4" stroke="#999" /><path d="M8 8l3 3" stroke="#999" /></S>
        <input aria-label="搜索" placeholder="请输入功能名称或问题描述" />
      </Search>
      <MenuIcon $w={32} aria-label="账户"><S s={17} v={17}><circle cx="8.5" cy="8.5" r="8" fill="#5a1d12" /><path d="M3 6c3-2 8-2 11 0M4 10h3M10 10h3" stroke="#c9822a" strokeWidth="2" /></S><Caret $c="#111" /></MenuIcon>
      <MenuIcon $w={20} aria-label="客服"><S s={14} v={14}><path d="M2 6.500a5 5 0 0 1 10 0M12 10c0 2-2 3-5 3" stroke={B} strokeWidth="1.5" /><path d="M0 6h2.500v4H0zM11.500 6H14v4h-2.500zM5.500 12h3v2h-3z" fill={B} /><path d="M5 9c1 1 3 1 4 0" stroke={O} /></S></MenuIcon>
      <MenuIcon $w={30} aria-label="帮助"><S s={15} v={15}><circle cx="7.5" cy="7.5" r="6.7" stroke={B} strokeWidth="1.2" /><path d="M5.500 6c0-3 4-3 4-.5 0 1.500-2 1.500-2 3M7.500 10v1.500" stroke={O} strokeWidth="1.5" /></S><Caret $c="#111" /></MenuIcon>
      <MenuIcon $w={30} aria-label="应用"><S s={14} v={14}><path d="M0 0h6v6H0zM0 8h6v6H0zM8 8h6v6H8z" fill={B} /><path d="M9 1h4v4H9z" stroke="#ffae4a" strokeWidth="1.5" /></S><Caret $c="#111" /></MenuIcon>
      <MenuIcon $w={32} aria-label="关于"><S s={15} v={15}><circle cx="7.5" cy="7.5" r="6.7" stroke={B} strokeWidth="1.2" /><path d="M8.500 3v1.800M8 6l-1 5.500" stroke={O} strokeWidth="1.8" /></S><Caret $c="#111" /></MenuIcon>
      <button aria-label="收起"><S s={12} v={12}><path d="M1 8l5-5 5 5" stroke="#777" strokeWidth="1.8" /></S></button>
    </MenuRow>
  </Top>
);

const ToolButton = ({ tool }: { tool: Tool }) => (
  <RibbonButton $on={tool.on}>
    <S>{icons[tool.i]}</S>
    <RibbonLabel>{tool.t}</RibbonLabel>
    <RibbonMore>{tool.t2}{tool.more && <Caret />}</RibbonMore>
  </RibbonButton>
);

const menu: [string, React.ReactNode][] = [
  ["计算器", <><rect x="1" width="14" height="16" rx="1" fill={B} /><path d="M2 2h12v4H2z" fill="#8cc2ff" /><path d="M3 9h2M7 9h2M3 11.500h2M7 11.500h2M3 14h2M7 14h2M11 14h2" stroke="#fff" /><path d="M11 9h2M11 11.500h2" stroke={O} strokeWidth="1.5" /></>],
  ["特殊符号", <path d="M1 14h5v-2C1 9 2 2 8 2s7 7 2 10v2h5" stroke={B} strokeWidth="2" />],
  ["图元公式", <path d="M1 14.500c4 0 2-12.500 7-12.500M1.500 6.500h6M8 7c3-1 2.500 5.500 6 5M14 6.500c-3 0-3 6-6.500 6" stroke={B} strokeWidth="1.8" />],
  ["五金手册", <><path d="M2 1h13v12H2z" fill={B} /><path d="M4.500 1v12" stroke="#cfe5ff" /><path d="M7 4h5M7 10h5M9.500 4v6" stroke="#ffc27a" strokeWidth="1.5" /><path d="M2 15h13" stroke={B} strokeWidth="1.5" /></>],
  ["土方计算", <><rect width="12" height="12" rx="3" fill="#93c7f8" /><rect x="3" y="2" width="12" height="13" rx="3" fill={B} /><path d="M6 7h6l-2-2M12 10H6l2 2" stroke="#fff" strokeWidth="1.4" /></>],
];

const Toolbar = () => (
  <Ribbon>
    {ribbon.map((g, i) => (
      <RibbonGroup key={i} $gap={g.gap} $before={g.before}>
        {g.tools.map((t) => <ToolButton key={t.t} tool={t} />)}
      </RibbonGroup>
    ))}
    <RibbonGroup $gap={0} $before={25}>
      <MenuHolder>
        <ToolButton tool={{ i: "tools", t: "工具", more: true, on: true }} />
        <Menu>
          {menu.map(([t, d]) => <MenuItem key={t} $on={t === "五金手册"}><S v={16}>{d}</S>{t}</MenuItem>)}
          <Tip as="li" role="tooltip">五金手册</Tip>
        </Menu>
      </MenuHolder>
    </RibbonGroup>
  </Ribbon>
);

const MainGrid = () => (
  <Grid>
    <colgroup>{mainWidths.map((w, i) => <col key={i} width={w} />)}</colgroup>
    <thead><tr>{mainHeads.map((h, i) => <Th key={i} $h={23} $on={i === 1}>{h}</Th>)}</tr></thead>
    <tbody>
      {mainRows.map(([no, code, kind, name, unit, expr, qty, price, total, pro, bg, h]) => (
        <Row key={no} $bg={bg} $h={h}>
          <NumTh $on={no === "100"}><Mixed t={no} /></NumTh>
          <CodeTd $kind={no === "97" ? "end" : no === "B1" ? "part" : ""} $sel={no === "100"}>
            {no === "B1" ? <Fold aria-label="折叠" /> : <Mixed t={code} />}
          </CodeTd>
          <Td $align="center">{kind}</Td>
          <Td $dim={name === hint}><Mixed t={name} /></Td>
          <Td><Mixed t={unit} /></Td>
          <Td><Mixed t={expr} /></Td>
          <Td $align="right"><Mixed t={qty} /></Td>
          <Td $align="right"><Mixed t={price} /></Td>
          <Td $align="right"><Mixed t={total} /></Td>
          <Td>{pro}</Td>
        </Row>
      ))}
    </tbody>
  </Grid>
);

const DetailGrid = () => (
  <Grid $small>
    <colgroup>{detailWidths.map((w, i) => <col key={i} width={w} />)}</colgroup>
    <thead><tr>{detailHeads.map((h, i) => <Th key={i} $h={23} $on={i === 7}>{h}</Th>)}</tr></thead>
    <tbody>
      {detailRows.map(([code, kind, name, spec, unit, per, qty, price, total], i) => (
        <Row key={code} $bg={i ? W : SEL} $h={23}>
          <NumTh $on={!i}><Mixed t={String(i + 1)} /></NumTh>
          <Td><Mixed t={code} /></Td>
          <Td $align="center">{kind}</Td>
          <Td>{name}</Td>
          <Td><Mixed t={spec} /></Td>
          <Td $align="center"><Mixed t={unit} /></Td>
          <Td />
          {i ? <Td $align="right"><Mixed t={per} /></Td> : <InputTd><CellInput aria-label="含量" defaultValue={per} /></InputTd>}
          <Td $align="right"><Mixed t={qty} /></Td>
          <Td $align="right"><Mixed t={price} /></Td>
          <Td $align="right"><Mixed t={price} /></Td>
          <Td $align="right"><Mixed t={price} /></Td>
          <Td $align="right"><Mixed t="0" /></Td>
          <Td $align="right"><Mixed t={total} /></Td>
          <Td>{i > 0 && <Check type="checkbox" aria-label="是否暂估" />}</Td>
          <Td><Check type="checkbox" aria-label="锁定数量" /></Td>
          <Td><Check type="checkbox" aria-label="是否计价" defaultChecked /></Td>
          <Td $bg={i ? "#fffaf3" : undefined} />
        </Row>
      ))}
    </tbody>
  </Grid>
);

export default function App() {
  return (
    <App_>
      <Global />
      <Header />
      <Toolbar />
      <PageTabs>
        {["造价分析", "工程概况", "取费设置", "预算书", "措施项目", "人材机汇总", "费用汇总"].map((t) => <PageTab key={t} $on={t === "预算书"}>{t}</PageTab>)}
        <TabTools>
          <S s={14} v={14}><path d="M7 0l6 7h-3v7H4V7H1z" fill={B} /></S>
          <S s={14} v={14}><path d="M7 14l6-7h-3V0H4v7H1z" fill={B} /></S>
          <S s={15} v={14}><path d="M0 7l7-6v4h8v4H7v4z" fill="#d0d0d0" /></S>
          <S s={15} v={14}><path d="M15 7L8 1v4H0v4h8v4z" fill="#d0d0d0" /></S>
          <ColumnTool aria-label="列设置">
            <S s={15} v={15}><path d="M1.500 0v15M5 0v4M8.500 0v4M12 0v4" stroke={B} strokeWidth="1.5" /><circle cx="10" cy="10" r="3" stroke={O} strokeWidth="2.5" /><path d="M10 5v2M10 13v2M5 10h2M13 10h2" stroke={O} strokeWidth="2" /></S>
            <Caret $c="#888" />
          </ColumnTool>
        </TabTools>
      </PageTabs>
      <Body>
        <Side>
          <SideHead>
            <Collapse aria-label="收起"><S s={13} v={13}><path d="M6 3L3 6.500 6 10M10 3L7 6.500 10 10" stroke="#666" /></S></Collapse>
          </SideHead>
          <TreeRoot>
            <S s={9} v={9}><path d="M.5 .5h8v8h-8z" stroke="#8a8a8a" fill="#fff" /><path d="M2 4.500h5" stroke={B} /></S>
            <S s={14} v={14}><path d="M12.500 5V.5H.5v12h4M3 3.500h5M3 6v4" stroke="#555" /><path d="M5 13.500V10l8-4.500" stroke="#555" /><path d="M5 9h8v5H5z" fill={B} /></S>
            整个项目
          </TreeRoot>
          <Tree>
            {leaves.map((t) => (
              <Leaf key={t}>
                <svg width="11" height="13" viewBox="0 0 11 13" fill="none"><path d="M.5 .5h6l3.500 3.500v8.500H.5z" fill="#fff" stroke="#6a6a6a" /><path d="M6.500 .5v3.500H10" stroke="#6a6a6a" /><path d="M2.500 6h5M2.500 8h5M2.500 10h5" stroke="#bbb" /></svg>
                {t}
              </Leaf>
            ))}
          </Tree>
        </Side>
        <Work>
          <Pane>
            <Clip><MainGrid /></Clip>
            <VBar $before={100} $thumb={20}><Arrow d="up" /><span /><Arrow d="down" /></VBar>
          </Pane>
          <HBar $before={186} $share={45.4}><Arrow d="left" /><span /><Arrow d="right" /></HBar>
          <DetailTabs>
            {["工料机显示", "单价构成", "标准换算", "换算信息", "工程量明细", "反查图形工程量", "说明信息"].map((t, i) => <DetailTab key={t} $on={!i}>{t}</DetailTab>)}
          </DetailTabs>
          <Pane $fixed={193}>
            <Clip><DetailGrid /></Clip>
            <VBar $before={2} $thumb={115}><Arrow d="up" /><span /><Arrow d="down" /></VBar>
          </Pane>
          <HBar $before={2} $share={92.6}><Arrow d="left" /><span /><Arrow d="right" /></HBar>
        </Work>
      </Body>
      <Status>
        <StatusItem $w={159}>增值税（一般计税方法 ）</StatusItem>
        <StatusItem $w={195}>山西省建筑工程预算定额(2018)</StatusItem>
        <StatusItem $w={75}>建筑工程</StatusItem>
        <StatusItem $w={153}>晋建标字【2019】62号</StatusItem>
        <StatusItem $w={78}>JIANJUN</StatusItem>
        <Views>
          <ViewButton $on aria-label="上下布局"><S s={12} v={12}><rect width="12" height="6.5" rx="1" fill={B} /><rect y="8" width="12" height="4" rx="1" fill={B} /></S></ViewButton>
          <ViewButton aria-label="左右布局"><S s={12} v={12}><rect width="5.5" height="12" rx="1" fill="#8a8a8a" /><rect x="6.8" width="5" height="12" rx="1" fill="#8a8a8a" /></S></ViewButton>
        </Views>
        <Zoom>
          <output>120%</output>
          <button aria-label="缩小"><S s={12} v={12}><path d="M0 6h12" stroke="#555" strokeWidth="2" /></S></button>
          <input type="range" aria-label="缩放" min={0} max={100} defaultValue={47} />
          <button aria-label="放大"><S s={12} v={12}><path d="M0 6h12M6 0v12" stroke="#555" strokeWidth="2" /></S></button>
        </Zoom>
      </Status>
      <TaskBar>
        <Start aria-label="开始">
          <svg width="38" height="38" viewBox="0 0 38 38">
            <defs>
              <radialGradient id="orb" cx=".5" cy=".85" r=".8"><stop offset="0" stopColor="#35d0f0" /><stop offset=".5" stopColor="#15649a" /><stop offset="1" stopColor="#8fa9bd" /></radialGradient>
            </defs>
            <circle cx="19" cy="19" r="17.5" fill="url(#orb)" stroke="#0f3556" />
            <path d="M3 19C3 8 12 3 19 3s16 5 16 16c-8-4-24-4-32 0z" fill="#fff" opacity=".35" />
            <path d="M11 11c3-2 5-1.500 7.500 0l-1.500 7.500c-3-1.500-5-1.500-8 0z" fill="#e8622b" />
            <path d="M19.500 11.500c3 1.500 5 1.500 9 0L26.500 19c-3 1.500-5 1.500-8.500 0z" fill="#8dc63f" />
            <path d="M8.500 20c3-1.500 5-1.500 8 0L15 27c-3-1.500-5-1.500-8 0z" fill="#4aa6e8" />
            <path d="M17.500 20.500c3 1.500 5 1.500 8.500 0L24.500 28c-3 1.500-5 1.500-8.500 0z" fill="#fcc92f" />
          </svg>
        </Start>
        <Dots />
        <TaskStack aria-label="资源管理器">
          <svg width="34" height="30" viewBox="0 0 34 30"><path d="M1 4h8l2-2h9v3h11v22H1z" fill="#e9cf72" /><path d="M2 8h30v20H2z" fill="#f8e59a" /><path d="M4 3h3" stroke="#3cb04a" strokeWidth="2" /><path d="M13 5h5" stroke="#d0402a" strokeWidth="2" /><path d="M22 6h7" stroke="#3a9ad0" strokeWidth="2" /><path d="M5 29v-7c0-2 2-3 4-3h16c2 0 4 1 4 3v7h-4v-5H9v5z" fill="#b5e0f4" stroke="#6ab4d8" /></svg>
        </TaskStack>
        <Task $on aria-label="广联达预算计价"><S s={32} v={32}><rect width="32" height="32" rx="5" fill={B} /><text x="16" y="25" textAnchor="middle" fontSize="25" fill="#fff" fontWeight="500" fontFamily="Noto Sans CJK SC">预</text></S></Task>
        <Task aria-label="浏览器"><S s={32} v={32}><rect width="32" height="32" rx="5" fill="#ff6a1a" /><path d="M16 0h11a5 5 0 0 1 5 5v22z" fill="#ffa012" /><path d="M5 4c7-1 12 3 11 8 0 4-3 4-4 8-1 3 1 7 5 7 3 0 4-2 4-5 0-4 0-7 2-9-2-1-1-4 1-5 3 3 4 6 4 9h-3c-1 2 0 5-1 8-1 4-5 5-9 5-6 0-10-3-10-8 0-4 3-6 2-8-3-1-4-3-3-5 1-2 2-3 1-5z" fill="#fff" /><circle cx="15" cy="24" r="2.500" fill="#fff" /></S></Task>
        <Task aria-label="算量"><S s={32} v={32}><rect width="32" height="32" rx="4" fill="#fff" /><path d="M4 18h24v9H4z" fill="#ff8c1a" /><path d="M4 22.500h24M11 18v4M19 18v4M14 23v4M22 23v4" stroke="#fff" /><path d="M17 4l10 5-3 2-5-2-6 6 5 5-5 3-9-8z" fill="#1769e0" /><path d="M17 4l10 5-3 2-6-3z" fill="#5fb4ff" /></S></Task>
        <Tray>
          <TrayIcons>
            <TrayDots />
            <span>CH</span>
            <S s={16} v={16}><rect x=".5" y=".5" width="15" height="15" rx="2" fill="#f4511e" /><path d="M12 4c-3-2-8-1-7 2 1 2 6 1 6 4 0 2-4 3-7 1" stroke="#fff" strokeWidth="2.2" /></S>
            <S s={16} v={16}><circle cx="8" cy="8" r="7" fill="#1726a8" stroke="#b8c6e8" /><path d="M5.500 6.500c0-3 5-3 5 0 0 1.500-2.500 1.500-2.500 3M8 11v1.500" stroke="#fff" strokeWidth="1.6" /></S>
            <S s={16} v={16}><path d="M7 .5h5v3H7zM4.500 2.500h5v3h-5z" stroke="#fff" /><path d="M5 12h6l-3 3z" fill="#fff" /></S>
            <S s={16} v={16}><path d="M0 1h16v11H0z" fill="#12a3a0" /><path d="M0 1h8v11H0z" fill="#1cb97b" /><path d="M5 5c1-2 4-2 4 0M8 6l1 4M3 15h10" stroke="#d9fff5" /></S>
            <S s={16} v={16}><path d="M8 1c3 1.500 5 1.500 6.500 1.500C15 9 12 13 8 15.500 4 13 1 9 1.500 2.500 3 2.500 5 2.500 8 1z" fill="#2b5be8" stroke="#fff" /><path d="M4.500 6L8 9.500 11.500 6V4.500h-7z" stroke="#fff" strokeWidth="1.300" /></S>
            <S s={16} v={16}><circle cx="6" cy="6" r="5.5" fill="#2fc45a" /><circle cx="11" cy="11" r="4.5" fill="#e8ece8" /><path d="M4 5v1M8 5v1M9.500 10v1M12.500 10v1" stroke="#333" /></S>
            <S s={16} v={16}><rect width="16" height="16" rx="1" fill="#fff" /><path d="M1 11h14v4H1z" fill="#ff8c1a" /><path d="M4 10c-2-5 1-8 5-8l3 3c-4-1-5 1-4 5z" fill="#1769e0" /></S>
            <S s={16} v={16}><path d="M5 4.500h9.500v7H5zM6 15h7M9.500 12v3M1.500 1v4h3V1M3 5v9h3" stroke="#fff" strokeWidth="1.2" /></S>
            <S s={16} v={16}><rect width="16" height="16" rx="1" fill="#1c1f1c" /><path d="M2 8c3-5 9-5 12 0-3 4-9 4-12 0z" fill="#76b900" /><circle cx="8" cy="8" r="2" fill="#1c1f1c" /></S>
            <S s={16} v={16}><path d="M2 1c6-1 11 3 13 10l-5 3C9 8 5 5 2 1z" fill="#111" /><circle cx="6" cy="9" r="3" fill="#ddd" /><path d="M2 12l9 3M11 11l-9 4" stroke="#ddd" strokeWidth="1.5" /></S>
            <S s={16} v={16}><rect width="16" height="16" rx="2" fill="#ffae10" /><path d="M5 11.500c-3 0-3-4-.5-4C5 4 9 3.500 10 5.500M7 11.500c2 0 2-5 5-5s2.500 5-.5 5c-1 0-2 0-3-1" stroke="#fff" strokeWidth="1.8" /></S>
            <S s={16} v={16}><path d="M3 6h2l4-4v12l-4-4H3z" fill="#fff" /><path d="M11 5c1 2 1 4 0 6" stroke="#fff" strokeWidth="1.3" /></S>
          </TrayIcons>
          <Clock>9:55<br />2022/5/13</Clock>
          <ShowDesktop aria-label="显示桌面" />
        </Tray>
      </TaskBar>
    </App_>
  );
}
